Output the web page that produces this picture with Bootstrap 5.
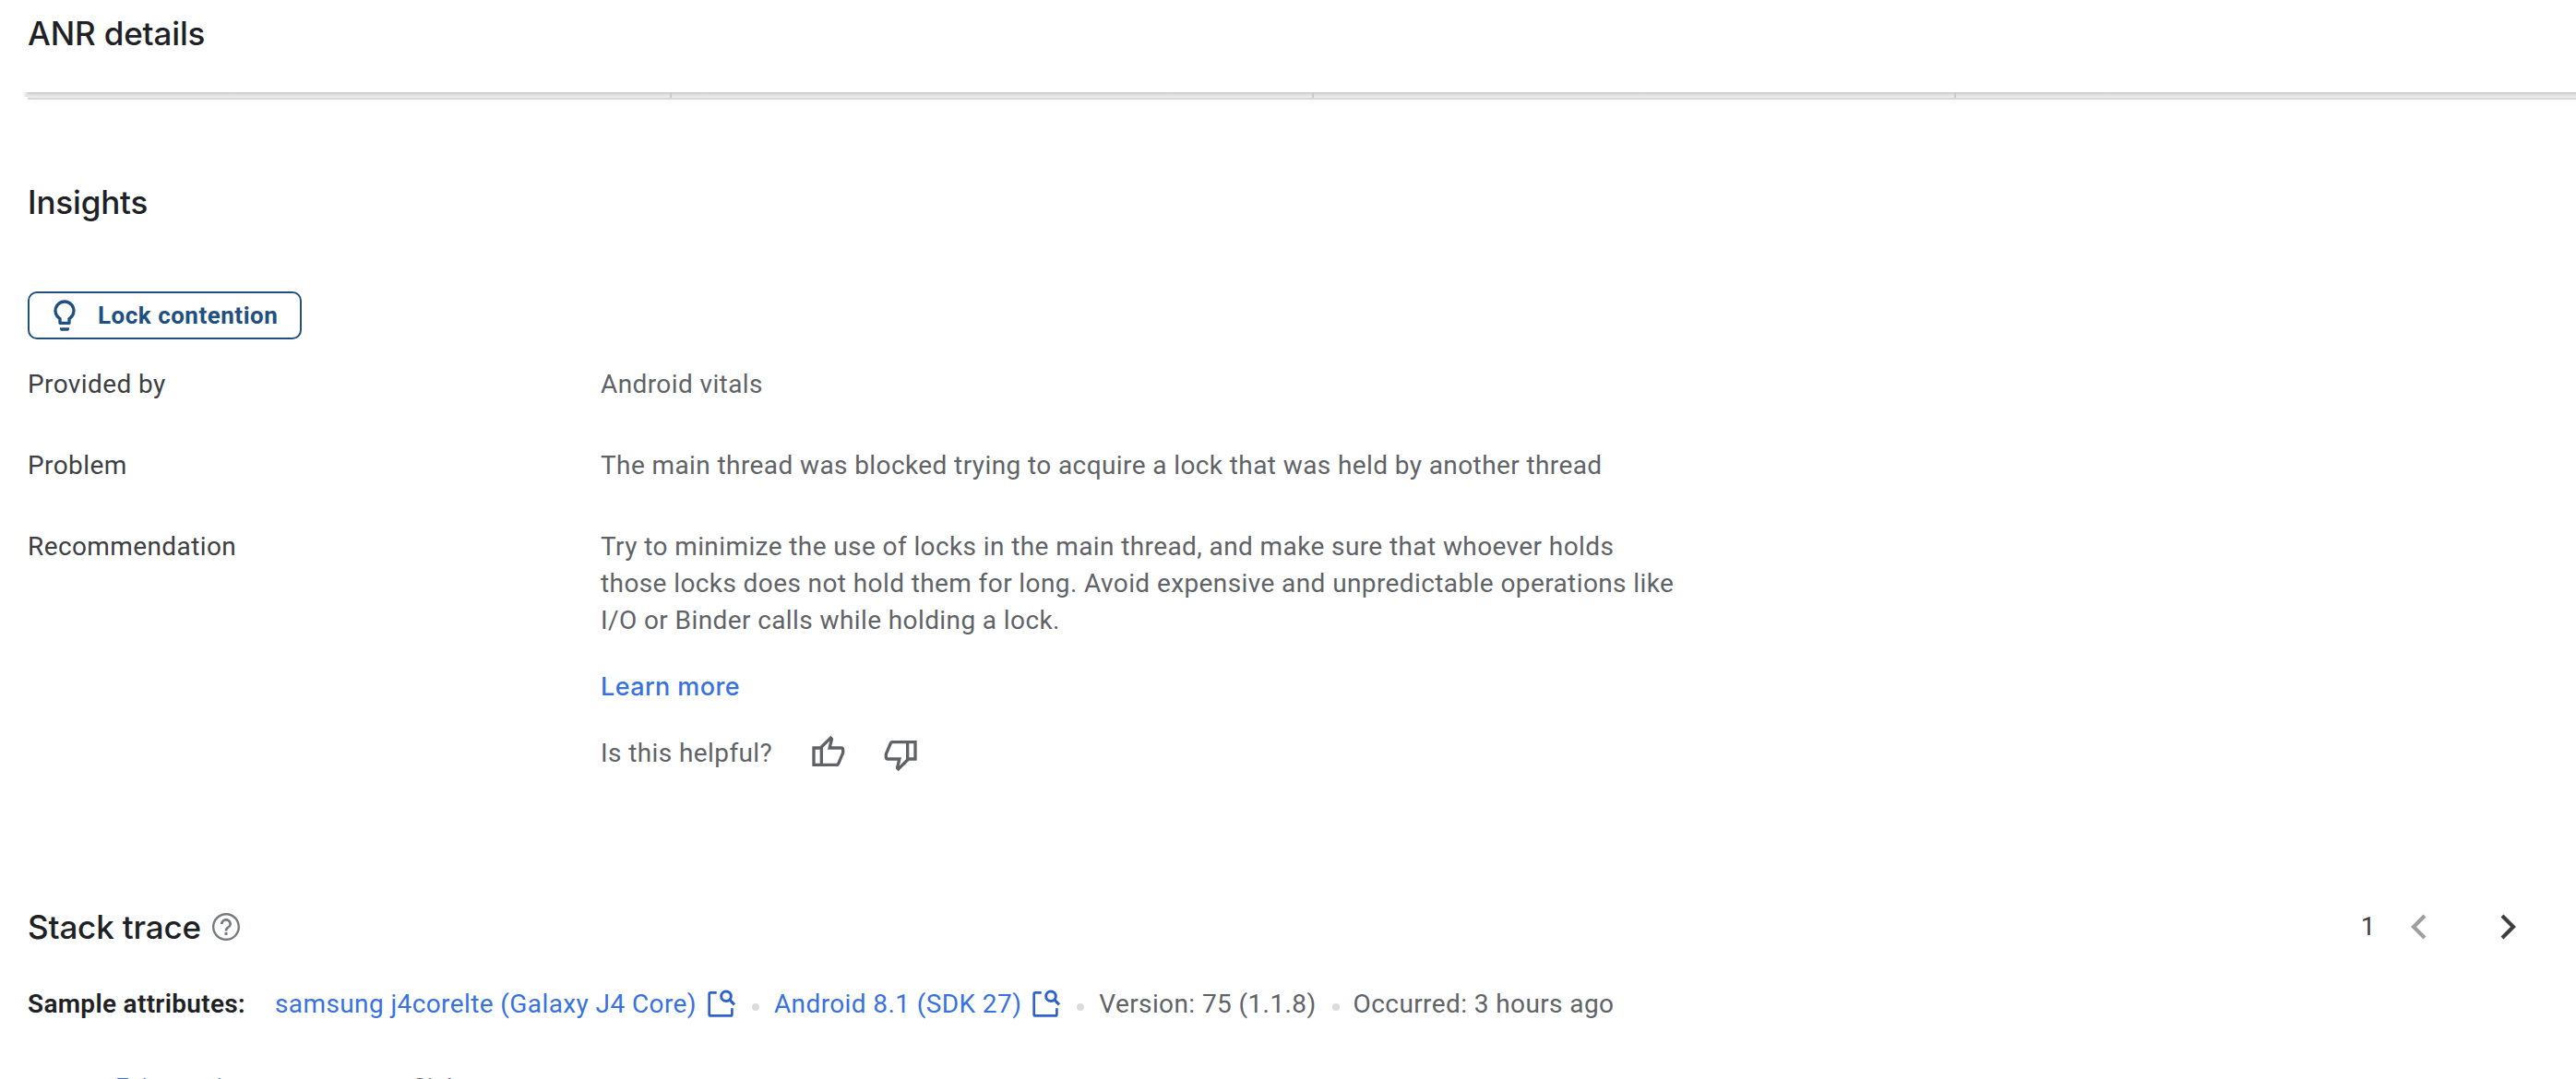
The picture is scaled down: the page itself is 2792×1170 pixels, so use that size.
<!DOCTYPE html>
<html lang="en">
<head>
  <meta charset="UTF-8">
  <meta name="viewport" content="width=device-width, initial-scale=1.0">
  <title>ANR details</title>
  <link href="https://cdn.jsdelivr.net/npm/bootstrap@5.3.0/dist/css/bootstrap.min.css" rel="stylesheet">
  <style>
    body {
      height: 1170px;
      overflow: hidden;
      background-color: #fff;
      color: #3c4043;
      font-family: Roboto, "Liberation Sans", sans-serif;
      font-size: 28px;
      line-height: 40px;
      letter-spacing: 0.4px;
    }
    .page {
      padding-left: 30px;
    }
    .section-title {
      color: #202124;
      font-family: Inter, "Open Sans", sans-serif;
      font-size: 35px;
      font-weight: 550;
      line-height: 48px;
      letter-spacing: -0.15px;
    }
    .page-header {
      height: 100px;
      padding-top: 12px;
    }
    /* bottom edge of the metrics table, scrolled under the header */
    .metric-strip {
      height: 8px;
      border-bottom: 2px solid #d6d6db;
      background: linear-gradient(#c6c8c7, #dfe0df 45%, #efefef);
      box-shadow: 3px 3px 6px rgba(0, 0, 0, 0.02);
    }
    .metric-strip::before {
      content: "";
      position: absolute;
      left: -6px;
      top: 0;
      width: 6px;
      height: 5px;
      background: linear-gradient(to left, #dedede, #fff);
    }
    .metric-cell {
      flex: 0 0 696px;
      border-right: 2px solid #c9cacc;
    }
    .metric-cell:first-child {
      flex-basis: 698px;
    }
    .metric-cell:last-child {
      border-right: 0;
    }
    .insights-title {
      margin-top: 87px;
    }
    .insight-chip {
      width: 297px;
      height: 52px;
      margin-top: 73px;
      padding-left: 18px;
      border: 2px solid #1f5080;
      border-radius: 10px;
      color: #1f5080;
      font-size: 26px;
      font-weight: 700;
      letter-spacing: 0.5px;
    }
    .insight-chip span {
      margin-left: 16px;
    }
    .insight-list {
      margin-top: 29px;
      row-gap: 48px;
      grid-template-columns: 621px 1180px;
    }
    .insight-list dt {
      font-weight: 400;
    }
    .insight-list dd {
      color: #5f6368;
    }
    .gap-block {
      margin-top: 32px;
    }
    .console-link {
      color: #3871e0;
      text-decoration: none;
    }
    .learn-link {
      font-family: Inter, "Open Sans", sans-serif;
      font-size: 27px;
      font-weight: 500;
    }
    .helpful-row {
      height: 40px;
    }
    .thumb-up {
      margin: -1px 0 0 40px;
    }
    .thumb-down {
      margin: 1px 0 0 40px;
    }
    .trace-header {
      margin-top: 144px;
      height: 48px;
    }
    .help-icon {
      margin-left: 9px;
      color: #777b80;
    }
    .pager {
      margin-right: 65px;
    }
    .pager .prev {
      margin-left: 38px;
      color: #9e9e9e;
    }
    .pager .next {
      margin-left: 80px;
      color: #3c4043;
    }
    .sample-row {
      margin-top: 40px;
      color: #5f6368;
    }
    .sample-label {
      width: 268px;
      color: #202124;
      font-weight: 600;
      letter-spacing: 0.3px;
    }
    .lookup-icon {
      margin-left: 11px;
      color: #3061cf;
    }
    .sep-dot {
      width: 8px;
      height: 8px;
      margin: 6px 16px 0 17px;
      border-radius: 50%;
      background-color: #dadce0;
    }
    .sep-dot:nth-last-child(2) {
      margin-right: 15px;
    }
    .trace-row {
      margin-top: 50px;
      padding-left: 95px;
      font-size: 26px;
      color: #5f6368;
    }
    .trace-link {
      width: 322px;
    }
  </style>
</head>
<body>
  <div class="page">
    <header class="page-header">
      <h1 class="section-title mb-0">ANR details</h1>
    </header>
    <div class="metric-strip d-flex position-relative">
      <div class="metric-cell"></div>
      <div class="metric-cell"></div>
      <div class="metric-cell"></div>
      <div class="metric-cell"></div>
    </div>

    <section>
      <h2 class="section-title insights-title mb-0">Insights</h2>
      <div class="insight-chip d-flex align-items-center">
        <svg width="40" height="40" viewBox="0 0 24 24" fill="currentColor">
          <path d="M9 20h6v1q0 1-1 1h-4q-1 0-1-1zM12 2a7 7 0 0 0-4 12.740V17q0 1 1 1h6q1 0 1-1v-2.260A7 7 0 0 0 12 2zm2.850 11.100-.85.6V16h-4v-2.300l-.85-.6A5 5 0 1 1 14.850 13.100z"/>
        </svg>
        <span>Lock contention</span>
      </div>

      <dl class="insight-list d-grid mb-0">
        <dt>Provided by</dt>
        <dd class="mb-0">Android vitals</dd>
        <dt>Problem</dt>
        <dd class="mb-0">The main thread was blocked trying to acquire a lock that was held by another thread</dd>
        <dt>Recommendation</dt>
        <dd class="mb-0">
          <div>Try to minimize the use of locks in the main thread, and make sure that whoever holds<br>those locks does not hold them for long. Avoid expensive and unpredictable operations like<br>I/O or Binder calls while holding a lock.</div>
          <div class="gap-block"><a class="console-link learn-link" href="#">Learn more</a></div>
          <div class="gap-block helpful-row d-flex align-items-start">
            <span>Is this helpful?</span>
            <svg class="thumb-up" width="40" height="40" viewBox="0 -960 960 960" fill="currentColor">
              <path d="M720-120H280v-520l280-280 50 50q7 7 11.500 19t4.500 23v14l-44 174h258q32 0 56 24t24 56v80q0 7-2 15t-4 15L794-168q-9 20-30 34t-44 14Zm-360-80h360l120-280v-80H480l54-220-174 174v406Zm0-406v406-406Zm-80-34v80H160v360h120v80H80v-520h200Z"/>
            </svg>
            <svg class="thumb-down" width="40" height="40" viewBox="0 -960 960 960" fill="currentColor">
              <path d="M240-840h440v520L400-40l-50-50q-7-7-11.500-19t-4.500-23v-14l44-174H120q-32 0-56-24t-24-56v-80q0-7 2-15t4-15l120-282q9-20 30-34t44-14Zm360 80H240L120-480v80h360l-54 220 174-174v-406Zm0 406v-406 406Zm80 34v-80h120v-360H680v-80h200v520H680Z"/>
            </svg>
          </div>
        </dd>
      </dl>
    </section>

    <section>
      <div class="trace-header d-flex align-items-center">
        <h2 class="section-title mb-0">Stack trace</h2>
        <svg class="help-icon" width="36" height="36" viewBox="0 0 24 24" fill="currentColor">
          <path d="M11 18h2v-2h-2v2zm1-16C6.480 2 2 6.480 2 12s4.480 10 10 10 10-4.480 10-10S17.520 2 12 2zm0 18.400c-4.630 0-8.400-3.770-8.400-8.400S7.370 3.600 12 3.600s8.400 3.770 8.400 8.400-3.770 8.400-8.400 8.400zM12 6c-2.210 0-4 1.790-4 4h1.800c0-1.210.990-2.200 2.200-2.200s2.200.990 2.200 2.200c0 2-3.100 1.750-3.100 5h1.800c0-2.250 3.100-2.500 3.100-5 0-2.210-1.790-4-4-4z"/>
        </svg>
        <div class="pager d-flex align-items-center ms-auto">
          <span>1</span>
          <svg class="prev" width="17" height="28" viewBox="0 0 17 28" fill="none" stroke="currentColor" stroke-width="4.200">
            <path d="M15 2 3 14l12 12"/>
          </svg>
          <svg class="next" width="17" height="28" viewBox="0 0 17 28" fill="none" stroke="currentColor" stroke-width="4.200">
            <path d="m2 2 12 12L2 26"/>
          </svg>
        </div>
      </div>

      <div class="sample-row d-flex align-items-center">
        <span class="sample-label">Sample attributes:</span>
        <a class="console-link" href="#">samsung j4corelte (Galaxy J4 Core)</a>
        <svg class="lookup-icon" width="32" height="32" viewBox="0 0 32 32" fill="none" stroke="currentColor" stroke-width="2.700">
          <path d="M10.700 3.400H4.200q-1.500 0-1.500 1.500v22q0 1.500 1.500 1.500h21.700q1.500 0 1.500-1.500v-6.600"/>
          <circle cx="21" cy="7.300" r="5.300" stroke-width="3"/>
          <path d="m24.600 10.900 5.400 5.400" stroke-width="3.200"/>
        </svg>
        <span class="sep-dot"></span>
        <a class="console-link" href="#">Android 8.1 (SDK 27)</a>
        <svg class="lookup-icon" width="32" height="32" viewBox="0 0 32 32" fill="none" stroke="currentColor" stroke-width="2.700">
          <path d="M10.700 3.400H4.200q-1.500 0-1.500 1.500v22q0 1.500 1.500 1.500h21.700q1.500 0 1.500-1.500v-6.600"/>
          <circle cx="21" cy="7.300" r="5.300" stroke-width="3"/>
          <path d="m24.600 10.900 5.400 5.400" stroke-width="3.200"/>
        </svg>
        <span class="sep-dot"></span>
        <span>Version: 75 (1.1.8)</span>
        <span class="sep-dot"></span>
        <span>Occurred: 3 hours ago</span>
      </div>

      <!-- first row of the trace, cut by the bottom of the window -->
      <div class="trace-row d-flex">
        <a class="console-link trace-link" href="#">Exit warnings</a>
        <span>Sink</span>
      </div>
    </section>
  </div>

  <script src="https://cdn.jsdelivr.net/npm/bootstrap@5.3.0/dist/js/bootstrap.bundle.min.js"></script>
</body>
</html>
